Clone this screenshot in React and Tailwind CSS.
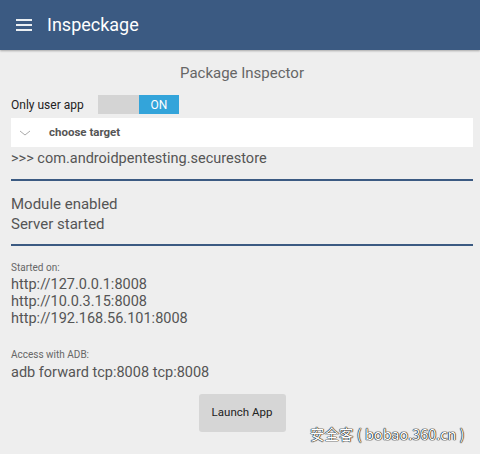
import React from "react";

const urls = ["http://127.0.0.1:8008", "http://10.0.3.15:8008", "http://192.168.56.101:8008"];

export default function App() {
  return (
    <div className="w-[480px] h-[454px] bg-[#eeeeee] overflow-hidden relative" style={{ fontFamily: "Roboto, 'Noto Sans', sans-serif" }}>
      {/* Toolbar */}
      <div className="h-[50px] bg-[#3b5a82] flex items-center shadow-[0_1px_2px_rgba(0,0,0,0.3)]">
        <div className="ml-[16px] w-[16px] flex flex-col gap-[3px]">
          <div className="h-[2px] bg-white/90" />
          <div className="h-[2px] bg-white/90" />
          <div className="h-[2px] bg-white/90" />
        </div>
        <span className="ml-[15px] text-white text-[18px] leading-none">Inspeckage</span>
      </div>

      <div className="px-[11px] pr-[7px]">
        <div className="text-center text-[15px] text-[#666] leading-none mt-[16px]">Package Inspector</div>

        {/* Only user app switch */}
        <div className="flex items-center mt-[14px] h-[19px]">
          <span className="text-[12px] text-[#222] w-[87px]">Only user app</span>
          <div className="flex h-[19px] w-[81px]">
            <div className="w-[41px] bg-[#d4d4d4]" />
            <div className="flex-1 bg-[#33a4da] text-white text-[12px] flex items-center justify-center">ON</div>
          </div>
        </div>

        {/* Spinner */}
        <div className="mt-[4px] h-[29px] bg-white flex items-center">
          <svg width="12" height="8" viewBox="0 0 12 8" className="ml-[8px]">
            <path d="M1 2 L6 6 L11 2" fill="none" stroke="#aaa" strokeWidth="1" />
          </svg>
          <span className="ml-[18px] text-[11.5px] font-bold text-[#555]">choose target</span>
        </div>

        <div className="text-[14.5px] text-[#555] mt-[2px] leading-[20px]">&gt;&gt;&gt; com.androidpentesting.securestore</div>

        <div className="h-[2px] bg-[#3b5a82] mt-[10px]" />

        <div className="mt-[13px] text-[15px] text-[#555] leading-[20px]">
          <div>Module enabled</div>
          <div>Server started</div>
        </div>

        <div className="h-[2px] bg-[#3b5a82] mt-[10px]" />

        <div className="mt-[16px] text-[10px] text-[#666] leading-[12px]">Started on:</div>
        <div className="mt-[2px] text-[14.5px] text-[#555] leading-[17px]">
          {urls.map((u) => (
            <div key={u}>{u}</div>
          ))}
        </div>

        <div className="mt-[22px] text-[10px] text-[#666] leading-[12px]">Access with ADB:</div>
        <div className="mt-[3px] text-[14.5px] text-[#555] leading-[18px]">adb forward tcp:8008 tcp:8008</div>

        <div className="flex justify-center mt-[12px]">
          <button className="w-[87px] h-[38px] bg-[#d6d6d6] rounded-[3px] text-[11.5px] text-[#222]">Launch App</button>
        </div>
      </div>

      <div
        className="absolute left-[310px] top-[427px] text-[14.5px] text-white leading-none whitespace-pre"
        style={{ textShadow: "0 0 1px #000, 0 0 1px #000, 0 0 1px #000", fontFamily: "'Noto Sans CJK SC', sans-serif" }}
      >
        安全客 ( bobao.360.cn )
      </div>
    </div>
  );
}
